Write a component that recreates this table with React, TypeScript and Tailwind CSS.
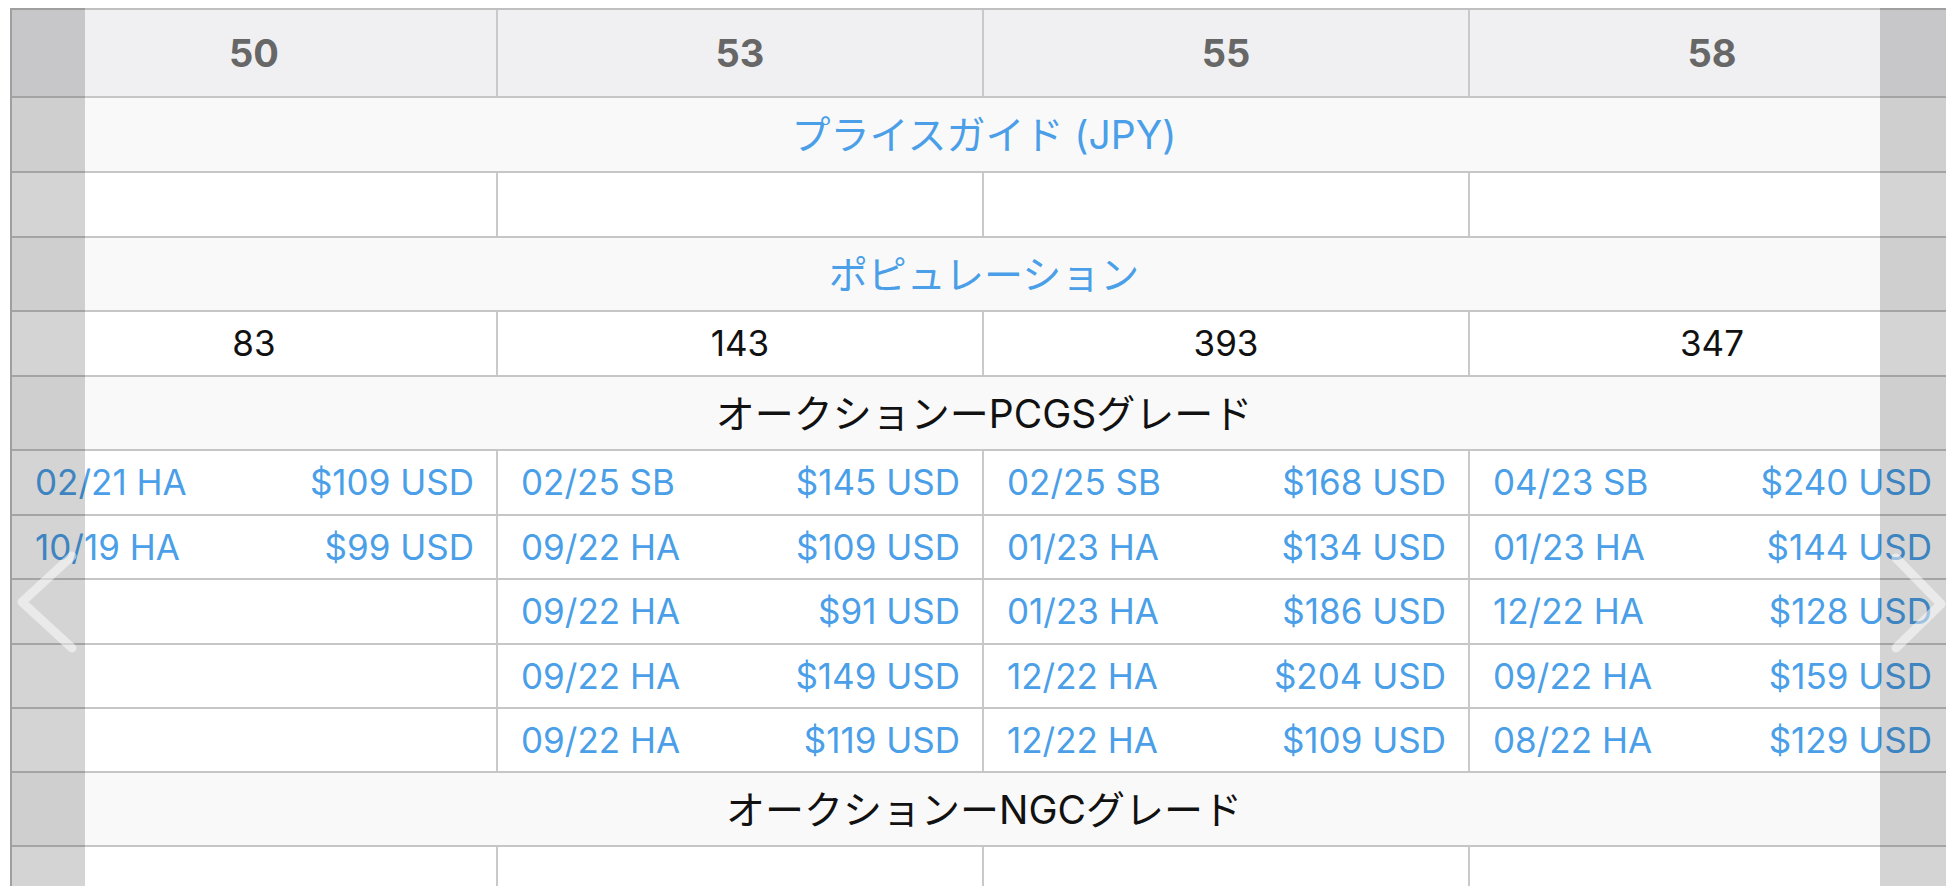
import React from "react";

const blue = "text-[#4a9fe8]";

type Pair = [string, string] | null;

const auction: Pair[][] = [
  [
    ["02/21 HA", "$109 USD"],
    ["02/25 SB", "$145 USD"],
    ["02/25 SB", "$168 USD"],
    ["04/23 SB", "$240 USD"],
  ],
  [
    ["10/19 HA", "$99 USD"],
    ["09/22 HA", "$109 USD"],
    ["01/23 HA", "$134 USD"],
    ["01/23 HA", "$144 USD"],
  ],
  [
    null,
    ["09/22 HA", "$91 USD"],
    ["01/23 HA", "$186 USD"],
    ["12/22 HA", "$128 USD"],
  ],
  [
    null,
    ["09/22 HA", "$149 USD"],
    ["12/22 HA", "$204 USD"],
    ["09/22 HA", "$159 USD"],
  ],
  [
    null,
    ["09/22 HA", "$119 USD"],
    ["12/22 HA", "$109 USD"],
    ["08/22 HA", "$129 USD"],
  ],
];

const rowHeights = ["h-[65px]", "h-[64px]", "h-[65px]", "h-[64px]", "h-[64px]"];

function SectionRow({
  children,
  color,
  h = "h-[74px]",
}: {
  children: React.ReactNode;
  color: string;
  h?: string;
}) {
  return (
    <div className={`flex ${h} items-center justify-center border-b-2 border-[#c6c6c6] bg-[#f9f9f9]`}>
      <span className={`text-[39px] leading-none ${color}`}>{children}</span>
    </div>
  );
}

function EmptyRow({ h }: { h: string }) {
  return (
    <div className={`flex ${h} border-b-2 border-[#c6c6c6] bg-white`}>
      {[0, 1, 2, 3].map((i) => (
        <div key={i} className="w-[486px] shrink-0 border-r-2 border-[#c9c9c9]" />
      ))}
    </div>
  );
}

export default function App() {
  return (
    <div
      className="relative h-[886px] w-[1946px] overflow-hidden bg-white"
      style={{ fontFamily: 'Inter, "Noto Sans CJK JP", sans-serif' }}
    >
      <div className="pl-[10px] pt-[8px]">
        <div className="w-[1946px] border-l-2 border-t-2 border-[#c0c0c0]">
          {/* header */}
          <div className="flex h-[88px] border-b-2 border-[#c6c6c6] bg-[#f0f0f2]">
            {["50", "53", "55", "58"].map((g) => (
              <div
                key={g}
                className="flex w-[486px] shrink-0 items-center justify-center border-r-2 border-[#c9c9c9] text-[38px] font-bold leading-none text-[#676767]"
              >
                {g}
              </div>
            ))}
          </div>

          <SectionRow color={blue} h="h-[75px]">
            プライスガイド (JPY)
          </SectionRow>
          <EmptyRow h="h-[65px]" />
          <SectionRow color={blue}>ポピュレーション</SectionRow>

          <div className="flex h-[65px] border-b-2 border-[#c6c6c6] bg-white">
            {["83", "143", "393", "347"].map((v) => (
              <div
                key={v}
                className="flex w-[486px] shrink-0 items-center justify-center border-r-2 border-[#c9c9c9] text-[35px] leading-none text-[#111]"
              >
                {v}
              </div>
            ))}
          </div>

          <SectionRow color="text-[#111]">オークションーPCGSグレード</SectionRow>

          {auction.map((row, ri) => (
            <div key={ri} className={`flex ${rowHeights[ri]} border-b-2 border-[#c6c6c6] bg-white`}>
              {row.map((cell, ci) => (
                <div
                  key={ci}
                  className={`flex w-[486px] shrink-0 items-center justify-between border-r-2 border-[#c9c9c9] pl-[23px] pr-[22px] text-[35px] leading-none ${blue}`}
                >
                  {cell ? (
                    <>
                      <span>{cell[0]}</span>
                      <span>{cell[1]}</span>
                    </>
                  ) : null}
                </div>
              ))}
            </div>
          ))}

          <SectionRow color="text-[#111]">オークションーNGCグレード</SectionRow>
          <EmptyRow h="h-[65px]" />
        </div>
      </div>

      {/* left slider overlay */}
      <div className="absolute bottom-0 left-[10px] top-[8px] w-[75px] bg-black/[0.17]">
        <svg className="absolute left-0 top-0" width="75" height="878" viewBox="0 0 75 878">
          <polyline
            points="62,548 12,594 62,640"
            fill="none"
            stroke="rgba(255,255,255,0.5)"
            strokeWidth="9"
            strokeLinecap="round"
            strokeLinejoin="round"
          />
        </svg>
      </div>

      {/* right slider overlay */}
      <div className="absolute bottom-0 left-[1880px] top-[8px] w-[66px] bg-black/[0.17]">
        <svg className="absolute left-0 top-0" width="66" height="878" viewBox="0 0 66 878">
          <polyline
            points="16,550 61,596 16,640"
            fill="none"
            stroke="rgba(255,255,255,0.5)"
            strokeWidth="9"
            strokeLinecap="round"
            strokeLinejoin="round"
          />
        </svg>
      </div>
    </div>
  );
}
